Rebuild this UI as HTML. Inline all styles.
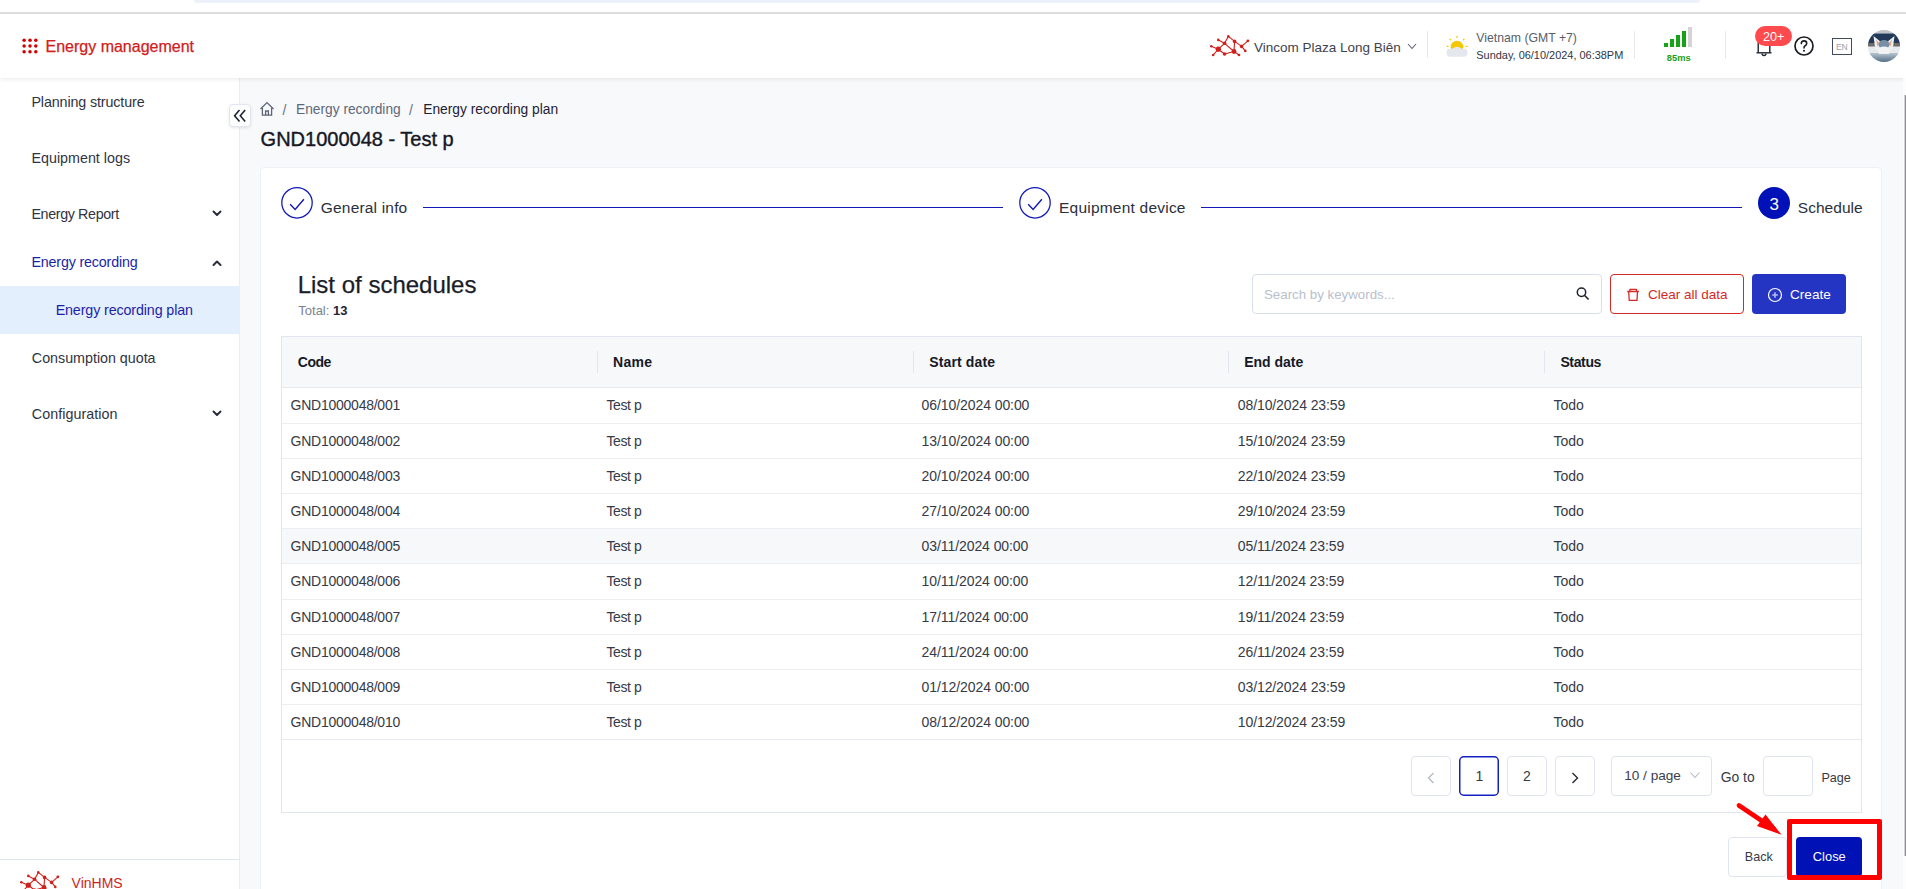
<!DOCTYPE html>
<html><head><meta charset="utf-8"><style>
html,body{margin:0;padding:0;width:1906px;height:889px;overflow:hidden;background:#fff;font-family:"Liberation Sans", sans-serif;}
.t{position:absolute;white-space:nowrap;line-height:1;}
</style></head><body>
<div style="position:absolute;left:0px;top:0px;width:1906px;height:12px;background:#fff"></div><div style="position:absolute;left:194px;top:0px;width:1506px;height:3px;background:#edf1f9;border-radius:0 0 14px 14px"></div><div style="position:absolute;left:0px;top:12px;width:1906px;height:2px;background:#dfe1df"></div><div style="position:absolute;left:240px;top:78px;width:1666px;height:811px;background:#f8f9fb"></div><div style="position:absolute;left:0px;top:78px;width:239px;height:811px;background:#fff"></div><div style="position:absolute;left:239px;top:78px;width:1px;height:811px;background:#ececec"></div><div style="position:absolute;left:0px;top:14px;width:1906px;height:64px;background:#fff;box-shadow:0 1px 5px rgba(0,0,0,0.09)"></div><svg style="position:absolute;left:22px;top:38px;" width="16" height="16" viewBox="0 0 16 16"><circle cx="2.1" cy="2.2" r="1.75" fill="#d40000"/><circle cx="2.1" cy="7.9" r="1.75" fill="#d40000"/><circle cx="2.1" cy="13.8" r="1.75" fill="#d40000"/><circle cx="8" cy="2.2" r="1.75" fill="#d40000"/><circle cx="8" cy="7.9" r="1.75" fill="#d40000"/><circle cx="8" cy="13.8" r="1.75" fill="#d40000"/><circle cx="13.8" cy="2.2" r="1.75" fill="#d40000"/><circle cx="13.8" cy="7.9" r="1.75" fill="#d40000"/><circle cx="13.8" cy="13.8" r="1.75" fill="#d40000"/></svg><div class="t" style="left:45.50px;top:38.76px;font-size:16px;color:#d1201b;font-weight:400;-webkit-text-stroke:0.25px #d1201b">Energy management</div><svg style="position:absolute;left:1210px;top:35px;" width="40" height="22" viewBox="0 0 40 22"><line x1="8.30" y1="4.90" x2="14.60" y2="8.30" stroke="#d0201c" stroke-width="1.10"/><line x1="18.30" y1="1.40" x2="14.60" y2="8.30" stroke="#d0201c" stroke-width="1.10"/><line x1="18.30" y1="1.40" x2="24.60" y2="6.40" stroke="#d0201c" stroke-width="1.10"/><line x1="24.60" y1="6.40" x2="31.60" y2="11.40" stroke="#d0201c" stroke-width="1.10"/><line x1="31.60" y1="11.40" x2="37.90" y2="5.80" stroke="#d0201c" stroke-width="1.10"/><line x1="31.60" y1="11.40" x2="35.30" y2="15.90" stroke="#d0201c" stroke-width="1.10"/><line x1="24.60" y1="6.40" x2="24.00" y2="16.50" stroke="#d0201c" stroke-width="1.10"/><line x1="14.60" y1="8.30" x2="8.30" y2="14.20" stroke="#d0201c" stroke-width="1.10"/><line x1="14.60" y1="8.30" x2="24.00" y2="16.50" stroke="#d0201c" stroke-width="1.10"/><line x1="1.30" y1="11.20" x2="8.30" y2="14.20" stroke="#d0201c" stroke-width="1.10"/><line x1="8.30" y1="14.20" x2="3.20" y2="20.00" stroke="#d0201c" stroke-width="1.10"/><line x1="8.30" y1="14.20" x2="14.60" y2="19.00" stroke="#d0201c" stroke-width="1.10"/><line x1="14.60" y1="19.00" x2="24.00" y2="16.50" stroke="#d0201c" stroke-width="1.10"/><line x1="24.00" y1="16.50" x2="29.00" y2="20.00" stroke="#d0201c" stroke-width="1.10"/><circle cx="8.30" cy="4.90" r="1.30" fill="#d0201c"/><circle cx="18.30" cy="1.40" r="1.30" fill="#d0201c"/><circle cx="14.60" cy="8.30" r="1.80" fill="#d0201c"/><circle cx="24.60" cy="6.40" r="1.80" fill="#d0201c"/><circle cx="37.90" cy="5.80" r="1.40" fill="#d0201c"/><circle cx="31.60" cy="11.40" r="1.80" fill="#d0201c"/><circle cx="1.30" cy="11.20" r="1.30" fill="#d0201c"/><circle cx="8.30" cy="14.20" r="2.60" fill="#d0201c"/><circle cx="24.00" cy="16.50" r="2.40" fill="#d0201c"/><circle cx="14.60" cy="19.00" r="1.80" fill="#d0201c"/><circle cx="3.20" cy="20.00" r="1.30" fill="#d0201c"/><circle cx="29.00" cy="20.00" r="1.30" fill="#d0201c"/><circle cx="35.30" cy="15.90" r="1.30" fill="#d0201c"/></svg><div class="t" style="left:1254.00px;top:40.77px;font-size:13.5px;color:#3d434e;font-weight:400;">Vincom Plaza Long Biên</div><svg style="position:absolute;left:1406px;top:41px;" width="12" height="10" viewBox="0 0 12 10"><path d="M2 3 L6 7.5 L10 3" fill="none" stroke="#5b6270" stroke-width="1.1"/></svg><div style="position:absolute;left:1427px;top:31px;width:1px;height:27px;background:#e6e8ec"></div><svg style="position:absolute;left:1444px;top:33px;" width="28" height="26" viewBox="0 0 28 26"><circle cx="13" cy="14" r="6.3" fill="#f4c700"/><g stroke="#f4c700" stroke-width="1.3" stroke-linecap="round"><line x1="13" y1="3.6" x2="13" y2="4.4"/><line x1="6" y1="6.3" x2="6.5" y2="6.8"/><line x1="20" y1="6.3" x2="19.5" y2="6.8"/><line x1="3" y1="13.3" x2="4" y2="13.3"/><line x1="22" y1="13.3" x2="23" y2="13.3"/></g><rect x="2.5" y="15.5" width="21" height="8.3" rx="4" fill="#e4e8ee"/><circle cx="13" cy="18.5" r="4.8" fill="#e4e8ee"/></svg><div class="t" style="left:1476.30px;top:31.73px;font-size:12.25px;color:#585e6a;font-weight:400;">Vietnam (GMT +7)</div><div class="t" style="left:1476.30px;top:49.83px;font-size:10.95px;color:#2f3542;font-weight:400;">Sunday, 06/10/2024, 06:38PM</div><div style="position:absolute;left:1634px;top:31px;width:1px;height:28px;background:#e6e8ec"></div><div style="position:absolute;left:1664px;top:43px;width:4px;height:4px;background:#17a317"></div><div style="position:absolute;left:1670px;top:39px;width:4px;height:8px;background:#17a317"></div><div style="position:absolute;left:1676px;top:35px;width:4px;height:12px;background:#17a317"></div><div style="position:absolute;left:1682px;top:31px;width:4px;height:16px;background:#17a317"></div><div style="position:absolute;left:1688px;top:27px;width:4px;height:20px;background:#d7d3d3"></div><div class="t" style="left:1666.70px;top:54.13px;font-size:9.3px;color:#18a018;font-weight:700;;letter-spacing:0.097px">85ms</div><div style="position:absolute;left:1725px;top:31px;width:1px;height:28px;background:#e6e8ec"></div><svg style="position:absolute;left:1754px;top:30px;" width="20" height="28" viewBox="0 0 20 28"><path d="M4.2 22.8 V14 Q4.2 6 10 6 Q15.8 6 15.8 14 V22.8" fill="none" stroke="#1f2530" stroke-width="1.4"/><line x1="2.5" y1="22.8" x2="17.5" y2="22.8" stroke="#1f2530" stroke-width="1.4"/><path d="M8 23.5 A2 2 0 0 0 12 23.5" fill="none" stroke="#1f2530" stroke-width="1.3"/></svg><div style="position:absolute;left:1755px;top:26px;width:37px;height:20px;background:#ff4a4e;border-radius:10px"></div><div class="t" style="left:1763.07px;top:30.93px;font-size:12.6px;color:#fff;font-weight:400;;letter-spacing:-0.059px">20+</div><svg style="position:absolute;left:1793px;top:35px;" width="22" height="22" viewBox="0 0 22 22"><circle cx="11" cy="11" r="9" fill="none" stroke="#1b1f24" stroke-width="1.7"/><path d="M8.3 8.6 Q8.3 5.9 11 5.9 Q13.7 5.9 13.7 8.4 Q13.7 10 11.9 11 Q11 11.6 11 13" fill="none" stroke="#1b1f24" stroke-width="1.6" stroke-linecap="round"/><circle cx="11" cy="15.8" r="1" fill="#1b1f24"/></svg><div style="position:absolute;left:1832px;top:38px;width:18px;height:15px;border:1.3px solid #3f4b5e;"></div><div class="t" style="left:1836.00px;top:43.00px;font-size:8.5px;color:#98a0ae;font-weight:400;;letter-spacing:-0.117px">EN</div><svg style="position:absolute;left:1868px;top:30px;" width="32" height="32" viewBox="0 0 32 32"><defs><clipPath id="av"><circle cx="16" cy="16" r="16"/></clipPath><linearGradient id="avb" x1="0" y1="0" x2="0" y2="1"><stop offset="0" stop-color="#b7c5d0"/><stop offset="1" stop-color="#557086"/></linearGradient><filter id="avf"><feGaussianBlur stdDeviation="0.6"/></filter></defs><g clip-path="url(#av)"><rect width="32" height="32" fill="#dfe4e8"/><rect y="0" width="32" height="3.5" fill="#bfc3c7"/><rect y="3.5" width="32" height="10.5" fill="#22395a"/><rect y="13" width="32" height="4" fill="#6e6b6b"/><rect y="16.5" width="32" height="8" fill="#e6eaee"/><rect y="23" width="32" height="9" fill="url(#avb)"/><g filter="url(#avf)"><path d="M5.5 6 L13 12 L19 12 L26.5 6 L25 17 L21 24 L11 24 L7 17 Z" fill="#eceff2"/><path d="M8 9.5 L11.5 13.5 L9.5 16.5 Z" fill="#eba38c"/><path d="M24 9.5 L20.5 13.5 L22.5 16.5 Z" fill="#eba38c"/><ellipse cx="16" cy="14.5" rx="5.5" ry="4.5" fill="#7890a3"/><ellipse cx="16" cy="20" rx="6" ry="3.5" fill="#f1f3f5"/></g></g></svg><div class="t" style="left:31.43px;top:94.70px;font-size:14.3px;color:#30343f;font-weight:400;;letter-spacing:-0.121px">Planning structure</div><div class="t" style="left:31.43px;top:151.00px;font-size:14.3px;color:#30343f;font-weight:400;;letter-spacing:0.009px">Equipment logs</div><div class="t" style="left:31.43px;top:207.40px;font-size:14.3px;color:#30343f;font-weight:400;;letter-spacing:-0.369px">Energy Report</div><div class="t" style="left:31.87px;top:351.00px;font-size:14.3px;color:#30343f;font-weight:400;;letter-spacing:-0.018px">Consumption quota</div><div class="t" style="left:31.87px;top:407.40px;font-size:14.3px;color:#30343f;font-weight:400;;letter-spacing:0.050px">Configuration</div><div style="position:absolute;left:0px;top:286px;width:240px;height:48px;background:#e4effd"></div><div class="t" style="left:31.43px;top:255.20px;font-size:14.3px;color:#1c1fa8;font-weight:400;;letter-spacing:-0.174px">Energy recording</div><div class="t" style="left:55.63px;top:303.10px;font-size:14.3px;color:#1c1fa8;font-weight:400;;letter-spacing:-0.125px">Energy recording plan</div><svg style="position:absolute;left:212px;top:210px;" width="10" height="7" viewBox="0 0 10 7"><path d="M1.5 1.5 L5 5 L8.5 1.5" fill="none" stroke="#2a2f3a" stroke-width="2" stroke-linecap="round" stroke-linejoin="round"/></svg><svg style="position:absolute;left:212px;top:410px;" width="10" height="7" viewBox="0 0 10 7"><path d="M1.5 1.5 L5 5 L8.5 1.5" fill="none" stroke="#2a2f3a" stroke-width="2" stroke-linecap="round" stroke-linejoin="round"/></svg><svg style="position:absolute;left:212px;top:259.5px;" width="10" height="7" viewBox="0 0 10 7"><path d="M1.5 5 L5 1.5 L8.5 5" fill="none" stroke="#2a2f3a" stroke-width="2" stroke-linecap="round" stroke-linejoin="round"/></svg><div style="position:absolute;left:0px;top:859px;width:239px;height:1px;background:#e0e5ef"></div><svg style="position:absolute;left:19.8px;top:871.1px;" width="40" height="23" viewBox="0 0 40 23"><line x1="8.30" y1="4.90" x2="14.60" y2="8.30" stroke="#d0201c" stroke-width="1.10"/><line x1="18.30" y1="1.40" x2="14.60" y2="8.30" stroke="#d0201c" stroke-width="1.10"/><line x1="18.30" y1="1.40" x2="24.60" y2="6.40" stroke="#d0201c" stroke-width="1.10"/><line x1="24.60" y1="6.40" x2="31.60" y2="11.40" stroke="#d0201c" stroke-width="1.10"/><line x1="31.60" y1="11.40" x2="37.90" y2="5.80" stroke="#d0201c" stroke-width="1.10"/><line x1="31.60" y1="11.40" x2="35.30" y2="15.90" stroke="#d0201c" stroke-width="1.10"/><line x1="24.60" y1="6.40" x2="24.00" y2="16.50" stroke="#d0201c" stroke-width="1.10"/><line x1="14.60" y1="8.30" x2="8.30" y2="14.20" stroke="#d0201c" stroke-width="1.10"/><line x1="14.60" y1="8.30" x2="24.00" y2="16.50" stroke="#d0201c" stroke-width="1.10"/><line x1="1.30" y1="11.20" x2="8.30" y2="14.20" stroke="#d0201c" stroke-width="1.10"/><line x1="8.30" y1="14.20" x2="3.20" y2="20.00" stroke="#d0201c" stroke-width="1.10"/><line x1="8.30" y1="14.20" x2="14.60" y2="19.00" stroke="#d0201c" stroke-width="1.10"/><line x1="14.60" y1="19.00" x2="24.00" y2="16.50" stroke="#d0201c" stroke-width="1.10"/><line x1="24.00" y1="16.50" x2="29.00" y2="20.00" stroke="#d0201c" stroke-width="1.10"/><circle cx="8.30" cy="4.90" r="1.30" fill="#d0201c"/><circle cx="18.30" cy="1.40" r="1.30" fill="#d0201c"/><circle cx="14.60" cy="8.30" r="1.80" fill="#d0201c"/><circle cx="24.60" cy="6.40" r="1.80" fill="#d0201c"/><circle cx="37.90" cy="5.80" r="1.40" fill="#d0201c"/><circle cx="31.60" cy="11.40" r="1.80" fill="#d0201c"/><circle cx="1.30" cy="11.20" r="1.30" fill="#d0201c"/><circle cx="8.30" cy="14.20" r="2.60" fill="#d0201c"/><circle cx="24.00" cy="16.50" r="2.40" fill="#d0201c"/><circle cx="14.60" cy="19.00" r="1.80" fill="#d0201c"/><circle cx="3.20" cy="20.00" r="1.30" fill="#d0201c"/><circle cx="29.00" cy="20.00" r="1.30" fill="#d0201c"/><circle cx="35.30" cy="15.90" r="1.30" fill="#d0201c"/></svg><div class="t" style="left:71.60px;top:875.65px;font-size:14px;color:#cf1f1b;font-weight:400;">VinHMS</div><div style="position:absolute;left:228.8px;top:104.4px;width:22.2px;height:22.8px;background:#fff;border:1px solid #dfe6f2;border-radius:4px;box-shadow:0 1px 3px rgba(0,0,0,0.10);box-sizing:border-box"></div><svg style="position:absolute;left:229px;top:104px;" width="22" height="23" viewBox="0 0 22 23"><path d="M10.5 6 L5.6 11.8 L10.5 17.6 M16.2 6 L11.3 11.8 L16.2 17.6" fill="none" stroke="#1f2530" stroke-width="1.6"/></svg><svg style="position:absolute;left:259px;top:101px;" width="16" height="16" viewBox="0 0 16 16"><path d="M1.5 8 L8 1.6 L14.5 8" fill="none" stroke="#5d6677" stroke-width="1.3"/><path d="M3.4 7 V14.2 H12.6 V7" fill="none" stroke="#5d6677" stroke-width="1.3"/><path d="M6.6 14.2 V10 H9.4 V14.2" fill="none" stroke="#5d6677" stroke-width="1.3"/></svg><div class="t" style="left:282.50px;top:103.15px;font-size:14px;color:#6b7280;font-weight:400;">/</div><div class="t" style="left:296.00px;top:103.36px;font-size:13.75px;color:#5f6878;font-weight:400;">Energy recording</div><div class="t" style="left:409.00px;top:103.15px;font-size:14px;color:#6b7280;font-weight:400;">/</div><div class="t" style="left:423.20px;top:103.32px;font-size:13.8px;color:#1e2235;font-weight:400;">Energy recording plan</div><div class="t" style="left:260.60px;top:129.07px;font-size:20px;color:#151825;font-weight:400;-webkit-text-stroke:0.4px #151825">GND1000048 - Test p</div><div style="position:absolute;left:260px;top:167px;width:1622px;height:722px;background:#fff;border:1px solid #edf0f5;border-bottom:none;box-sizing:border-box;border-radius:5px 5px 0 0"></div><svg style="position:absolute;left:280px;top:186px;" width="34" height="34" viewBox="0 0 34 34"><circle cx="17" cy="16.8" r="15.2" fill="none" stroke="#1019b8" stroke-width="1.25"/><path d="M10.2 18.3 L15.1 23.4 L23.9 13.2" fill="none" stroke="#1019b8" stroke-width="1.4"/></svg><div class="t" style="left:320.82px;top:200.28px;font-size:15.5px;color:#2a2f3c;font-weight:400;;letter-spacing:0.181px">General info</div><div style="position:absolute;left:423px;top:207px;width:580px;height:1.3px;background:#1019b8"></div><svg style="position:absolute;left:1018px;top:186px;" width="34" height="34" viewBox="0 0 34 34"><circle cx="17" cy="16.8" r="15.2" fill="none" stroke="#1019b8" stroke-width="1.25"/><path d="M10.2 18.3 L15.1 23.4 L23.9 13.2" fill="none" stroke="#1019b8" stroke-width="1.4"/></svg><div class="t" style="left:1059.03px;top:200.28px;font-size:15.5px;color:#2a2f3c;font-weight:400;;letter-spacing:0.216px">Equipment device</div><div style="position:absolute;left:1201px;top:207px;width:541px;height:1.3px;background:#1019b8"></div><div style="position:absolute;left:1758px;top:187px;width:32px;height:32px;background:#0011b8;border-radius:50%"></div><div class="t" style="left:1769.60px;top:196.31px;font-size:17px;color:#fff;font-weight:400;">3</div><div class="t" style="left:1797.80px;top:200.28px;font-size:15.5px;color:#2a2f3c;font-weight:400;;letter-spacing:0.037px">Schedule</div><div class="t" style="left:297.70px;top:272.68px;font-size:24px;color:#1a1d29;font-weight:400;-webkit-text-stroke:0.25px #1a1d29">List of schedules</div><div class="t" style="left:298.30px;top:303.80px;font-size:13px;color:#7b8291;font-weight:400;">Total: <b style="color:#222633">13</b></div><div style="position:absolute;left:1252px;top:274px;width:349.5px;height:39.5px;border:1px solid #d9dfea;border-radius:4px;box-sizing:border-box;background:#fff"></div><div class="t" style="left:1264.00px;top:287.74px;font-size:13.3px;color:#b9c0cc;font-weight:400;">Search by keywords...</div><svg style="position:absolute;left:1574px;top:285px;" width="18" height="18" viewBox="0 0 18 18"><circle cx="7.5" cy="7.3" r="4.2" fill="none" stroke="#1d222b" stroke-width="1.5"/><line x1="10.6" y1="10.5" x2="14.6" y2="14.5" stroke="#1d222b" stroke-width="1.6"/></svg><div style="position:absolute;left:1610px;top:274px;width:134px;height:40px;border:1.3px solid #d42a24;border-radius:4px;box-sizing:border-box;background:#fff"></div><svg style="position:absolute;left:1625px;top:286px;" width="16" height="17" viewBox="0 0 16 17"><path d="M2.2 5.5 H13.9 M4.9 5.5 V3.3 H11.5 V5.5 M3.7 5.5 L4.2 14.4 H12 L12.5 5.5" fill="none" stroke="#d42a24" stroke-width="1.3" stroke-linejoin="round"/></svg><div class="t" style="left:1648.00px;top:287.57px;font-size:13.5px;color:#d42a24;font-weight:400;">Clear all data</div><div style="position:absolute;left:1752px;top:274px;width:94px;height:40px;background:#2535c3;border-radius:4px"></div><svg style="position:absolute;left:1767px;top:287px;" width="16" height="16" viewBox="0 0 16 16"><circle cx="8" cy="8" r="6.5" fill="none" stroke="#fff" stroke-width="1.2"/><path d="M8 5.2 V10.8 M5.2 8 H10.8" stroke="#b3b9ee" stroke-width="1.6"/></svg><div class="t" style="left:1790.00px;top:288.49px;font-size:13.6px;color:#fff;font-weight:400;">Create</div><div style="position:absolute;left:281px;top:336px;width:1581px;height:477px;border:1px solid #e1e5ee;box-sizing:border-box"></div><div style="position:absolute;left:282px;top:337px;width:1579px;height:50.4px;background:#f7f8fa"></div><div style="position:absolute;left:282px;top:387px;width:1579px;height:1px;background:#e6e9ef"></div><div class="t" style="left:297.83px;top:355.25px;font-size:14px;color:#161a26;font-weight:700;;letter-spacing:-0.549px">Code</div><div style="position:absolute;left:597px;top:351px;width:1px;height:22px;background:#e3e6ec"></div><div class="t" style="left:613.06px;top:355.25px;font-size:14px;color:#161a26;font-weight:700;;letter-spacing:0.295px">Name</div><div style="position:absolute;left:913px;top:351px;width:1px;height:22px;background:#e3e6ec"></div><div class="t" style="left:929.20px;top:355.25px;font-size:14px;color:#161a26;font-weight:700;;letter-spacing:0.146px">Start date</div><div style="position:absolute;left:1228px;top:351px;width:1px;height:22px;background:#e3e6ec"></div><div class="t" style="left:1244.26px;top:355.25px;font-size:14px;color:#161a26;font-weight:700;;letter-spacing:-0.029px">End date</div><div style="position:absolute;left:1544px;top:351px;width:1px;height:22px;background:#e3e6ec"></div><div class="t" style="left:1560.40px;top:355.25px;font-size:14px;color:#161a26;font-weight:700;;letter-spacing:-0.362px">Status</div><div style="position:absolute;left:282px;top:529.2px;width:1579px;height:34.2px;background:#f7f8fa"></div><div style="position:absolute;left:282px;top:423px;width:1579px;height:1px;background:#eceef2"></div><div class="t" style="left:290.60px;top:398.45px;font-size:14px;color:#363a46;font-weight:400;letter-spacing:-0.25px">GND1000048/001</div><div class="t" style="left:606.40px;top:398.45px;font-size:14px;color:#363a46;font-weight:400;letter-spacing:-0.39px">Test p</div><div class="t" style="left:921.60px;top:398.45px;font-size:14px;color:#363a46;font-weight:400;letter-spacing:-0.08px">06/10/2024 00:00</div><div class="t" style="left:1237.80px;top:398.45px;font-size:14px;color:#363a46;font-weight:400;letter-spacing:-0.1px">08/10/2024 23:59</div><div class="t" style="left:1553.60px;top:398.45px;font-size:14px;color:#363a46;font-weight:400;letter-spacing:-0.09px">Todo</div><div style="position:absolute;left:282px;top:458px;width:1579px;height:1px;background:#eceef2"></div><div class="t" style="left:290.60px;top:433.65px;font-size:14px;color:#363a46;font-weight:400;letter-spacing:-0.25px">GND1000048/002</div><div class="t" style="left:606.40px;top:433.65px;font-size:14px;color:#363a46;font-weight:400;letter-spacing:-0.39px">Test p</div><div class="t" style="left:921.60px;top:433.65px;font-size:14px;color:#363a46;font-weight:400;letter-spacing:-0.08px">13/10/2024 00:00</div><div class="t" style="left:1237.80px;top:433.65px;font-size:14px;color:#363a46;font-weight:400;letter-spacing:-0.1px">15/10/2024 23:59</div><div class="t" style="left:1553.60px;top:433.65px;font-size:14px;color:#363a46;font-weight:400;letter-spacing:-0.09px">Todo</div><div style="position:absolute;left:282px;top:493px;width:1579px;height:1px;background:#eceef2"></div><div class="t" style="left:290.60px;top:468.85px;font-size:14px;color:#363a46;font-weight:400;letter-spacing:-0.25px">GND1000048/003</div><div class="t" style="left:606.40px;top:468.85px;font-size:14px;color:#363a46;font-weight:400;letter-spacing:-0.39px">Test p</div><div class="t" style="left:921.60px;top:468.85px;font-size:14px;color:#363a46;font-weight:400;letter-spacing:-0.08px">20/10/2024 00:00</div><div class="t" style="left:1237.80px;top:468.85px;font-size:14px;color:#363a46;font-weight:400;letter-spacing:-0.1px">22/10/2024 23:59</div><div class="t" style="left:1553.60px;top:468.85px;font-size:14px;color:#363a46;font-weight:400;letter-spacing:-0.09px">Todo</div><div style="position:absolute;left:282px;top:528px;width:1579px;height:1px;background:#eceef2"></div><div class="t" style="left:290.60px;top:504.05px;font-size:14px;color:#363a46;font-weight:400;letter-spacing:-0.25px">GND1000048/004</div><div class="t" style="left:606.40px;top:504.05px;font-size:14px;color:#363a46;font-weight:400;letter-spacing:-0.39px">Test p</div><div class="t" style="left:921.60px;top:504.05px;font-size:14px;color:#363a46;font-weight:400;letter-spacing:-0.08px">27/10/2024 00:00</div><div class="t" style="left:1237.80px;top:504.05px;font-size:14px;color:#363a46;font-weight:400;letter-spacing:-0.1px">29/10/2024 23:59</div><div class="t" style="left:1553.60px;top:504.05px;font-size:14px;color:#363a46;font-weight:400;letter-spacing:-0.09px">Todo</div><div style="position:absolute;left:282px;top:563px;width:1579px;height:1px;background:#eceef2"></div><div class="t" style="left:290.60px;top:539.25px;font-size:14px;color:#363a46;font-weight:400;letter-spacing:-0.25px">GND1000048/005</div><div class="t" style="left:606.40px;top:539.25px;font-size:14px;color:#363a46;font-weight:400;letter-spacing:-0.39px">Test p</div><div class="t" style="left:921.60px;top:539.25px;font-size:14px;color:#363a46;font-weight:400;letter-spacing:-0.08px">03/11/2024 00:00</div><div class="t" style="left:1237.80px;top:539.25px;font-size:14px;color:#363a46;font-weight:400;letter-spacing:-0.1px">05/11/2024 23:59</div><div class="t" style="left:1553.60px;top:539.25px;font-size:14px;color:#363a46;font-weight:400;letter-spacing:-0.09px">Todo</div><div style="position:absolute;left:282px;top:599px;width:1579px;height:1px;background:#eceef2"></div><div class="t" style="left:290.60px;top:574.45px;font-size:14px;color:#363a46;font-weight:400;letter-spacing:-0.25px">GND1000048/006</div><div class="t" style="left:606.40px;top:574.45px;font-size:14px;color:#363a46;font-weight:400;letter-spacing:-0.39px">Test p</div><div class="t" style="left:921.60px;top:574.45px;font-size:14px;color:#363a46;font-weight:400;letter-spacing:-0.08px">10/11/2024 00:00</div><div class="t" style="left:1237.80px;top:574.45px;font-size:14px;color:#363a46;font-weight:400;letter-spacing:-0.1px">12/11/2024 23:59</div><div class="t" style="left:1553.60px;top:574.45px;font-size:14px;color:#363a46;font-weight:400;letter-spacing:-0.09px">Todo</div><div style="position:absolute;left:282px;top:634px;width:1579px;height:1px;background:#eceef2"></div><div class="t" style="left:290.60px;top:609.65px;font-size:14px;color:#363a46;font-weight:400;letter-spacing:-0.25px">GND1000048/007</div><div class="t" style="left:606.40px;top:609.65px;font-size:14px;color:#363a46;font-weight:400;letter-spacing:-0.39px">Test p</div><div class="t" style="left:921.60px;top:609.65px;font-size:14px;color:#363a46;font-weight:400;letter-spacing:-0.08px">17/11/2024 00:00</div><div class="t" style="left:1237.80px;top:609.65px;font-size:14px;color:#363a46;font-weight:400;letter-spacing:-0.1px">19/11/2024 23:59</div><div class="t" style="left:1553.60px;top:609.65px;font-size:14px;color:#363a46;font-weight:400;letter-spacing:-0.09px">Todo</div><div style="position:absolute;left:282px;top:669px;width:1579px;height:1px;background:#eceef2"></div><div class="t" style="left:290.60px;top:644.85px;font-size:14px;color:#363a46;font-weight:400;letter-spacing:-0.25px">GND1000048/008</div><div class="t" style="left:606.40px;top:644.85px;font-size:14px;color:#363a46;font-weight:400;letter-spacing:-0.39px">Test p</div><div class="t" style="left:921.60px;top:644.85px;font-size:14px;color:#363a46;font-weight:400;letter-spacing:-0.08px">24/11/2024 00:00</div><div class="t" style="left:1237.80px;top:644.85px;font-size:14px;color:#363a46;font-weight:400;letter-spacing:-0.1px">26/11/2024 23:59</div><div class="t" style="left:1553.60px;top:644.85px;font-size:14px;color:#363a46;font-weight:400;letter-spacing:-0.09px">Todo</div><div style="position:absolute;left:282px;top:704px;width:1579px;height:1px;background:#eceef2"></div><div class="t" style="left:290.60px;top:680.05px;font-size:14px;color:#363a46;font-weight:400;letter-spacing:-0.25px">GND1000048/009</div><div class="t" style="left:606.40px;top:680.05px;font-size:14px;color:#363a46;font-weight:400;letter-spacing:-0.39px">Test p</div><div class="t" style="left:921.60px;top:680.05px;font-size:14px;color:#363a46;font-weight:400;letter-spacing:-0.08px">01/12/2024 00:00</div><div class="t" style="left:1237.80px;top:680.05px;font-size:14px;color:#363a46;font-weight:400;letter-spacing:-0.1px">03/12/2024 23:59</div><div class="t" style="left:1553.60px;top:680.05px;font-size:14px;color:#363a46;font-weight:400;letter-spacing:-0.09px">Todo</div><div class="t" style="left:290.60px;top:715.25px;font-size:14px;color:#363a46;font-weight:400;letter-spacing:-0.25px">GND1000048/010</div><div class="t" style="left:606.40px;top:715.25px;font-size:14px;color:#363a46;font-weight:400;letter-spacing:-0.39px">Test p</div><div class="t" style="left:921.60px;top:715.25px;font-size:14px;color:#363a46;font-weight:400;letter-spacing:-0.08px">08/12/2024 00:00</div><div class="t" style="left:1237.80px;top:715.25px;font-size:14px;color:#363a46;font-weight:400;letter-spacing:-0.1px">10/12/2024 23:59</div><div class="t" style="left:1553.60px;top:715.25px;font-size:14px;color:#363a46;font-weight:400;letter-spacing:-0.09px">Todo</div><div style="position:absolute;left:282px;top:739px;width:1579px;height:1px;background:#e6e9ef"></div><div style="position:absolute;left:1411px;top:756px;width:40px;height:40px;border:1px solid #dfe4ee;border-radius:4px;box-sizing:border-box;background:#fff"></div><svg style="position:absolute;left:1411px;top:756px;" width="40" height="40" viewBox="0 0 40 40"><path d="M22.5 17 L17.5 22 L22.5 27" fill="none" stroke="#b4b9c2" stroke-width="1.3"/></svg><svg style="position:absolute;left:1459px;top:756px;" width="40" height="40" viewBox="0 0 40 40"><rect x="0.75" y="0.75" width="38.5" height="38.5" rx="4" fill="#fff" stroke="#1421c0" stroke-width="1.5"/></svg><div class="t" style="left:1475.50px;top:769.15px;font-size:14px;color:#363a46;font-weight:400;">1</div><div style="position:absolute;left:1507px;top:756px;width:40px;height:40px;border:1px solid #dfe4ee;border-radius:4px;box-sizing:border-box;background:#fff"></div><div class="t" style="left:1523.00px;top:769.15px;font-size:14px;color:#363a46;font-weight:400;">2</div><div style="position:absolute;left:1555px;top:756px;width:40px;height:40px;border:1px solid #dfe4ee;border-radius:4px;box-sizing:border-box;background:#fff"></div><svg style="position:absolute;left:1555px;top:756px;" width="40" height="40" viewBox="0 0 40 40"><path d="M17.5 17 L22.5 22 L17.5 27" fill="none" stroke="#262a36" stroke-width="1.4"/></svg><div style="position:absolute;left:1611px;top:756px;width:100.5px;height:40px;border:1px solid #dfe4ee;border-radius:4px;box-sizing:border-box;background:#fff"></div><div class="t" style="left:1624.20px;top:769.09px;font-size:13.6px;color:#3b404c;font-weight:400;">10 / page</div><svg style="position:absolute;left:1688px;top:770px;" width="14" height="11" viewBox="0 0 14 11"><path d="M2.5 2.5 L7 7.5 L11.5 2.5" fill="none" stroke="#b4b9c2" stroke-width="1.1"/></svg><div class="t" style="left:1720.70px;top:770.53px;font-size:13.9px;color:#363a46;font-weight:400;">Go to</div><div style="position:absolute;left:1763px;top:756px;width:50px;height:40px;border:1px solid #dfe4ee;border-radius:4px;box-sizing:border-box;background:#fff"></div><div class="t" style="left:1821.40px;top:771.63px;font-size:12.6px;color:#363a46;font-weight:400;">Page</div><div style="position:absolute;left:1728px;top:837px;width:58.5px;height:40px;border:1px solid #dfe4ee;border-radius:4px;box-sizing:border-box;background:#fff"></div><div class="t" style="left:1744.80px;top:851.13px;font-size:12.6px;color:#363a46;font-weight:400;">Back</div><div style="position:absolute;left:1796px;top:837px;width:66px;height:40px;background:#0011b5;border-radius:4px"></div><div class="t" style="left:1812.80px;top:850.88px;font-size:12.9px;color:#fff;font-weight:400;">Close</div><div style="position:absolute;left:1787px;top:819px;width:95px;height:61px;border:5px solid #ff0000;border-radius:2px;box-sizing:border-box"></div><svg style="position:absolute;left:1730px;top:798px;" width="60" height="42" viewBox="0 0 60 42"><line x1="9" y1="7.5" x2="44" y2="31" stroke="#ff0000" stroke-width="4.6" stroke-linecap="round"/><path d="M27 28 L35.5 16.5 L51.5 36.8 Z" fill="#ff0000"/></svg><div style="position:absolute;left:1903px;top:78px;width:3px;height:811px;background:#fdfdfd"></div><div style="position:absolute;left:1904px;top:95px;width:1px;height:761px;background:#d2d2d6"></div><div style="position:absolute;left:1905px;top:95px;width:1px;height:761px;background:#8e8e93"></div>
</body></html>
